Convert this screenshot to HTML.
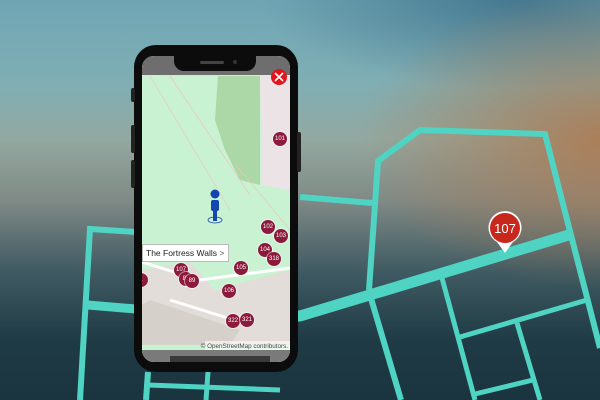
<!DOCTYPE html>
<html><head><meta charset="utf-8"><style>
html,body{margin:0;padding:0}
body{width:600px;height:400px;overflow:hidden;position:relative;font-family:"Liberation Sans",sans-serif;
background:linear-gradient(180deg,#6fa6b4 0%,#7faeb4 20%,#93a8a0 35%,#808a86 50%,#3f5a62 68%,#1f3b45 85%,#1a3440 100%);}
.bg2{position:absolute;inset:0;background:radial-gradient(ellipse 240px 150px at 600px 140px,rgba(175,120,78,.85),rgba(175,120,78,0) 100%),radial-gradient(ellipse 260px 90px at 520px 0px,rgba(40,90,120,.6),rgba(40,90,120,0))}
svg.lines{position:absolute;left:0;top:0}
.phone{position:absolute;left:134px;top:45px;width:164px;height:327px;background:#0c0c0c;border-radius:22px}
.screen{position:absolute;left:142px;top:56px;width:148px;height:306px;border-radius:12px;overflow:hidden;background:#c9f2d2}
.notch{position:absolute;left:174px;top:53px;width:82px;height:18px;background:#0c0c0c;border-radius:0 0 10px 10px}
.m{position:absolute;width:14px;height:14px;border-radius:50%;background:#8c1a3c;color:#fff;font-size:6px;line-height:14px;text-align:center;box-shadow:0 0 0 1px rgba(255,255,255,.5)}
</style></head><body>
<div class="bg2"></div>
<svg class="lines" width="600" height="400" viewBox="0 0 600 400">
<g stroke="#4fd3c3" fill="none" stroke-linejoin="miter">
<polyline points="300,197 372,203" stroke-width="6"/>
<polyline points="369,290 378,161 420,130 545,134 600,348" stroke-width="6"/>
<polyline points="135,313 300,316 572,234" stroke-width="11"/>
<line x1="370" y1="295" x2="401" y2="400" stroke-width="6"/>
<line x1="442" y1="278" x2="475" y2="400" stroke-width="5"/>
<line x1="460" y1="337" x2="587" y2="300" stroke-width="5"/>
<line x1="517" y1="323" x2="540" y2="400" stroke-width="5"/>
<line x1="475" y1="394" x2="533" y2="380" stroke-width="5"/>
<polyline points="80,400 90,229 136,232" stroke-width="6"/>
<line x1="88" y1="305" x2="136" y2="309" stroke-width="9"/>
<line x1="148" y1="372" x2="146" y2="400" stroke-width="6"/>
<line x1="208" y1="372" x2="206" y2="400" stroke-width="5"/>
<line x1="148" y1="385" x2="280" y2="390" stroke-width="5"/>
</g>
<path d="M505,253 L497,242 A16.5,16.5 0 1 1 513,242 Z" fill="#fff"/>
<circle cx="505" cy="228" r="15" fill="#c8281c"/>
<text x="505" y="233" font-size="13" fill="#fff" text-anchor="middle" font-family="Liberation Sans">107</text>
</svg>
<div class="phone"></div>
<div style="position:absolute;left:131px;top:88px;width:4px;height:14px;background:#222;border-radius:2px"></div>
<div style="position:absolute;left:131px;top:125px;width:4px;height:28px;background:#222;border-radius:2px"></div>
<div style="position:absolute;left:131px;top:160px;width:4px;height:28px;background:#222;border-radius:2px"></div>
<div style="position:absolute;left:297px;top:132px;width:4px;height:40px;background:#222;border-radius:2px"></div>
<div class="screen">
<svg width="148" height="306" viewBox="142 56 148 306" style="position:absolute;left:0;top:0">
<rect x="142" y="56" width="148" height="306" fill="#c9f2d2"/>
<polygon points="218,76 260,76 260,185 240,180 225,150 215,120" fill="#abd8a6"/>
<polygon points="260,70 290,70 290,190 262,185" fill="#ece3e6"/>
<path d="M150,76 L230,210 M170,76 L250,195 M236,165 L290,230" stroke="#e8c8b8" stroke-width="0.7" fill="none"/>
<polygon points="142,270 190,262 215,290 290,270 290,345 142,345" fill="#e2ddd8"/>
<polygon points="150,300 240,330 230,345 142,345 142,305" fill="#d6d0cb"/>
<path d="M142,262 L200,280 L290,268 M170,300 L250,325" stroke="#fff" stroke-width="3" fill="none"/>
<rect x="142" y="56" width="148" height="19" fill="#6e6e6e"/>
<rect x="142" y="350" width="148" height="12" fill="#7a7a7a"/>
<rect x="170" y="356" width="100" height="6" fill="#3a3a3a"/>
<circle cx="279" cy="77" r="8" fill="#e4141c"/>
<path d="M275,73 L283,81 M283,73 L275,81" stroke="#fff" stroke-width="1.6"/>
<circle cx="215" cy="194" r="4.5" fill="#1546b0"/>
<rect x="211" y="200" width="8" height="11" rx="2" fill="#1546b0"/>
<rect x="213" y="209" width="4" height="12" fill="#1546b0"/>
<ellipse cx="215" cy="220" rx="7" ry="3" fill="none" stroke="#1546b0" stroke-width="0.8"/>
<rect x="205" y="341" width="85" height="9" fill="rgba(255,255,255,.6)"/>
<text x="288" y="348" font-size="6.3" fill="#444" text-anchor="end" font-family="Liberation Sans">© OpenStreetMap contributors.</text>
</svg>
<div class="m" style="left:131px;top:76px">101</div>
<div class="m" style="left:119px;top:164px">102</div>
<div class="m" style="left:132px;top:173px">103</div>
<div class="m" style="left:116px;top:187px">104</div>
<div class="m" style="left:125px;top:196px">318</div>
<div class="m" style="left:92px;top:205px">105</div>
<div class="m" style="left:32px;top:207px">107</div>
<div class="m" style="left:37px;top:216px">88</div>
<div class="m" style="left:43px;top:218px">89</div>
<div class="m" style="left:80px;top:228px">106</div>
<div class="m" style="left:84px;top:258px">322</div>
<div class="m" style="left:98px;top:257px">321</div>
<div class="m" style="left:-8px;top:217px">1</div>
<div style="position:absolute;left:0;top:188px;width:87px;height:18px;background:#fff;border:1px solid #bbb;box-sizing:border-box;font-size:8.5px;line-height:16px;padding-left:3px;color:#222">The Fortress Walls <span style="color:#555">&gt;</span></div>
</div>
<div class="notch"></div>
<div style="position:absolute;left:200px;top:61px;width:24px;height:3px;background:#444;border-radius:2px"></div>
<div style="position:absolute;left:233px;top:60px;width:4px;height:4px;background:#333;border-radius:50%"></div>
</body></html>
